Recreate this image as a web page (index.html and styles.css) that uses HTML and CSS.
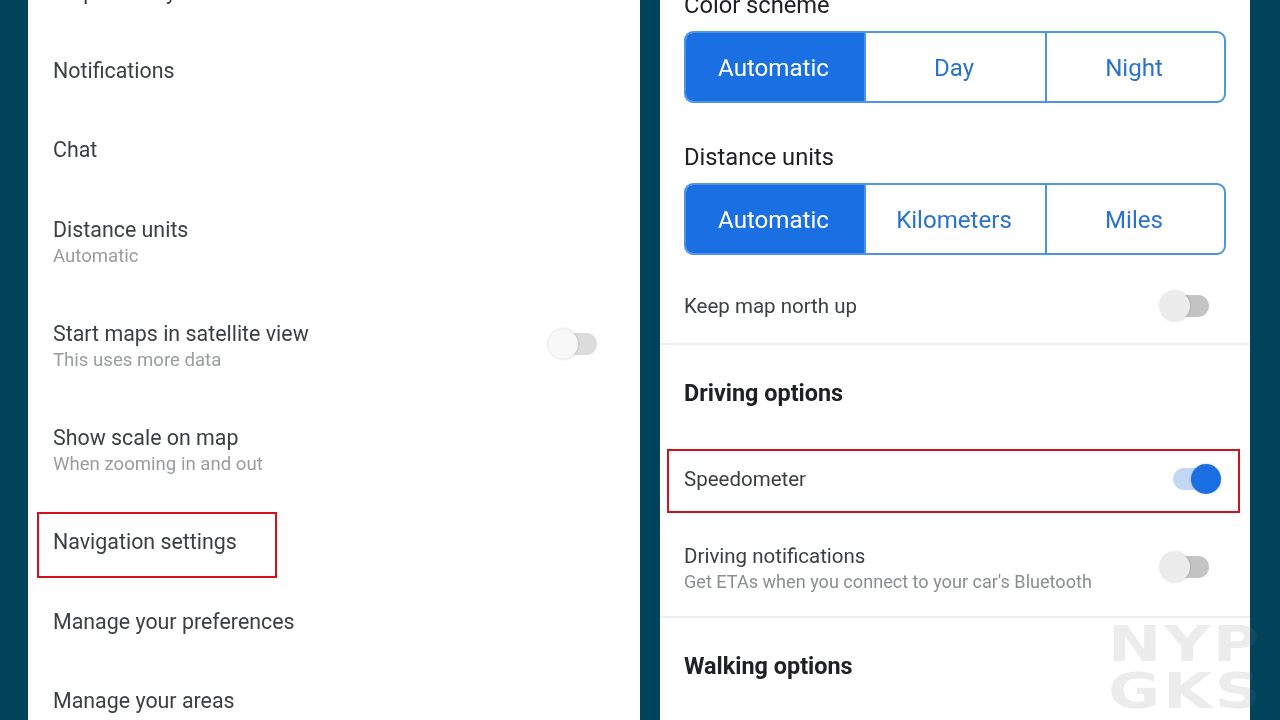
FILE: index.html
```html
<!DOCTYPE html>
<html lang="en">
<head>
  <meta charset="utf-8">
  <title>Navigation settings</title>
  <link rel="stylesheet" href="styles.css">
</head>
<body>
  <div class="panel panel-left">
    <div class="row"><p class="row-title">Maps history</p></div>
    <div class="row"><p class="row-title">Notifications</p></div>
    <div class="row"><p class="row-title">Chat</p></div>
    <div class="row row-double row-tall">
      <div>
        <p class="row-title">Distance units</p>
        <p class="row-sub">Automatic</p>
      </div>
    </div>
    <div class="row row-double">
      <div>
        <p class="row-title">Start maps in satellite view</p>
        <p class="row-sub">This uses more data</p>
      </div>
      <span class="toggle toggle-pale"></span>
    </div>
    <div class="row row-double">
      <div>
        <p class="row-title">Show scale on map</p>
        <p class="row-sub">When zooming in and out</p>
      </div>
    </div>
    <div class="row row-boxed">
      <div class="red-box"><p class="row-title">Navigation settings</p></div>
    </div>
    <div class="row"><p class="row-title">Manage your preferences</p></div>
    <div class="row"><p class="row-title">Manage your areas</p></div>
  </div>

  <div class="panel panel-right">
    <h3 class="group-label label-first">Color scheme</h3>
    <div class="segments">
      <div class="segment active">Automatic</div>
      <div class="segment">Day</div>
      <div class="segment">Night</div>
    </div>
    <h3 class="group-label">Distance units</h3>
    <div class="segments">
      <div class="segment active">Automatic</div>
      <div class="segment">Kilometers</div>
      <div class="segment">Miles</div>
    </div>
    <div class="option option-north">
      <p class="option-title">Keep map north up</p>
      <span class="toggle"></span>
    </div>
    <div class="section-head head-driving"><h2>Driving options</h2></div>
    <div class="option option-speed">
      <p class="option-title">Speedometer</p>
      <span class="toggle toggle-on"></span>
    </div>
    <div class="option option-notify">
      <div>
        <p class="option-title">Driving notifications</p>
        <p class="option-sub">Get ETAs when you connect to your car's Bluetooth</p>
      </div>
      <span class="toggle"></span>
    </div>
    <div class="section-head"><h2>Walking options</h2></div>
  </div>

  <div class="watermark">
    <span>NYP</span>
    <span>GKS</span>
  </div>
</body>
</html>
```

FILE: styles.css
```css
html, body {
  height: 720px;
  overflow: hidden;
}

body {
  margin: 0;
  padding-left: 28px;
  display: flex;
  gap: 20px;
  background-color: #00435a;
  font-family: Roboto, "Liberation Sans", sans-serif;
}

p, h2, h3 {
  margin: 0;
  font-weight: 400;
}

.panel {
  height: 720px;
  background-color: white;
  overflow: hidden;
  filter: blur(0.4px);
}

/* left list */
.panel-left {
  width: 612px;
}

.row {
  height: 79px;
  padding: 0 43px 0 25px;
  box-sizing: border-box;
  display: flex;
  align-items: center;
  justify-content: space-between;
}

.row:first-child {
  margin-top: -48px;
}

.row-double {
  height: 104px;
  padding-top: 2px;
}

.row-tall {
  height: 105px;
}

.row-double .toggle {
  margin-bottom: 6px;
}

.row-title {
  font-size: 21.4px;
  line-height: 27px;
  color: #3c4043;
}

.row-sub {
  font-size: 18.6px;
  line-height: 27px;
  color: #9a9da0;
}

.row-boxed {
  height: 80px;
  padding: 10px 0 4px 9px;
  align-items: stretch;
  justify-content: flex-start;
}

.red-box {
  width: 240px;
  border: 2px solid #d2101e;
  box-sizing: border-box;
  padding: 14px 0 0 14px;
}

/* right settings */
.panel-right {
  width: 590px;
  padding: 0 24px;
  box-sizing: border-box;
}

.group-label {
  font-size: 23.7px;
  line-height: 30px;
  color: #202124;
  margin-top: 39px;
  margin-bottom: 11px;
}

.label-first {
  margin-top: -10px;
  margin-bottom: 11px;
}

.segments {
  display: flex;
  height: 72px;
  border: 2px solid #4d93e6;
  border-radius: 9px;
  box-sizing: border-box;
  overflow: hidden;
}

.segment {
  flex: none;
  box-sizing: border-box;
  width: 181px;
  padding: 2px 3px 0 0;
  display: flex;
  align-items: center;
  justify-content: center;
  font-size: 24.1px;
  color: #2a72d0;
  border-left: 2px solid #4d93e6;
}

.segment:last-child {
  flex: 1;
}

.segment.active {
  width: 178px;
  background-color: #1a6fe3;
  color: white;
  border-left: none;
}

.option {
  display: flex;
  align-items: center;
  justify-content: space-between;
  box-sizing: border-box;
}

.option-title {
  font-size: 20.5px;
  line-height: 26px;
  color: #3c4043;
}

.option-sub {
  font-size: 18.1px;
  line-height: 26px;
  color: #8a8d91;
}

.option-north {
  height: 90px;
  margin: 0 -24px;
  padding: 14px 41px 0 24px;
  border-bottom: 2px solid #eeeeee;
}

.section-head {
  height: 96px;
  display: flex;
  align-items: center;
}

.head-driving {
  box-sizing: border-box;
  height: 104px;
  padding-bottom: 8px;
}

.section-head h2 {
  font-size: 23.4px;
  font-weight: 700;
  color: #202124;
}

.option-speed {
  width: 573px;
  height: 64px;
  margin-left: -17px;
  padding: 0 29px 4px 15px;
  border: 2px solid #d2101e;
}

.option-notify {
  height: 105px;
  margin: 0 -24px;
  padding: 9px 41px 0 24px;
  border-bottom: 2px solid #eeeeee;
}

.option-notify .toggle {
  margin-bottom: 4px;
}

/* switches */
.toggle {
  position: relative;
  display: block;
  width: 36px;
  height: 22px;
  border-radius: 11px;
  background-color: #c4c4c4;
}

.toggle::after {
  content: "";
  position: absolute;
  left: -13px;
  top: -4px;
  width: 30px;
  height: 30px;
  border-radius: 50%;
  background-color: #ececec;
  box-shadow: 0 0 3px rgba(0, 0, 0, 0.2);
}

.toggle-pale {
  background-color: #dcdcdc;
}

.toggle-pale::after {
  background-color: #f8f8f8;
}

.toggle-on {
  background-color: #c2d8f6;
}

.toggle-on::after {
  left: 18px;
  background-color: #1a6fe3;
}

/* site mark over the picture */
.watermark {
  position: absolute;
  left: 1108px;
  top: 617px;
  width: 172px;
  overflow: hidden;
  font-family: "DejaVu Sans", sans-serif;
  font-weight: 700;
  font-size: 49px;
  letter-spacing: 2px;
  color: rgba(120, 120, 120, 0.14);
  white-space: nowrap;
  transform: scaleX(1.3);
  transform-origin: left;
  filter: blur(0.6px);
}

.watermark span {
  display: block;
  height: 47px;
  line-height: 56px;
}
```
